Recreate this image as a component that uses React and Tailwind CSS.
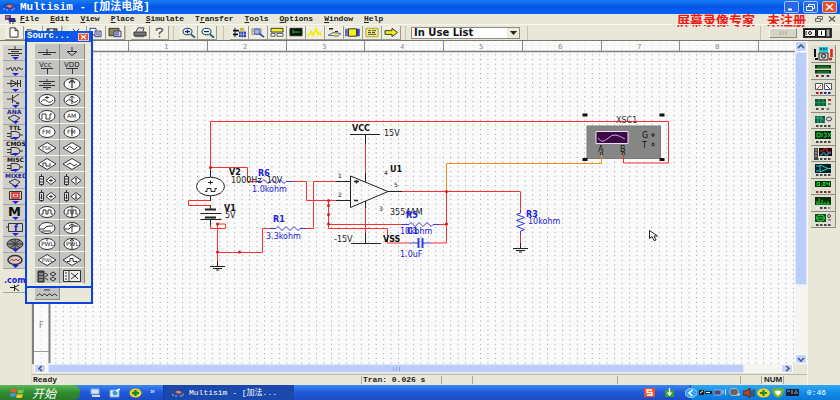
const menus = [
  ["", "F", "ile"],
  ["", "E", "dit"],
  ["", "V", "iew"],
  ["", "P", "lace"],
  ["", "S", "imulate"],
  ["T", "r", "ansfer"],
  ["", "T", "ools"],
  ["", "O", "ptions"],
  ["", "W", "indow"],
  ["", "H", "elp"],
];

/* ---------- small chips used in the title bar, menu and taskbar ---------- */
function AppIcon() {
  return (
    <svg width="13" height="10" viewBox="0 0 13 10">
      <path d="M0 4l5-3 8 3-5 4z" fill="#3a3f8c" />
      <path d="M3 4l3-1.5L10 4 7 6z" fill="#c98a7a" />
      <path d="M1 6v2M4 7v2M9 7v2M11 5.500v2" stroke="#b9bdd8" />
    </svg>
  );
}

function DocIcon() {
  return (
    <svg width="13" height="10" viewBox="0 0 13 10">
      <path d="M1 1h6v5H1z" fill="#5a4aa8" />
      <path d="M2 2h3v2H2z" fill="#d66" />
      <path d="M4 4h7l1 4H5z" fill="#2e2a80" />
      <path d="M6 8v2M9 8v2" stroke="#333" />
    </svg>
  );
}

/* ---------- title bar ---------- */
function TitleBar() {
  return (
    <header className="flex h-3.5 shrink-0 items-center gap-1 bg-linear-to-b from-[#1a7cf4] via-[#0557e6] to-[#0562f8] pr-[3px] pl-[3px]">
      <AppIcon />
      <h1 className="flex-1 font-['Liberation_Mono','Noto_Sans_CJK_SC',monospace] text-[11px] leading-none font-bold whitespace-pre text-white">
        Multisim - [加法电路]
      </h1>
      <div className="flex gap-1">
        <button aria-label="Minimize" className="flex h-3 w-[15px] items-center justify-center rounded-xs border border-[#a9c6fa] bg-[#2a66e8]">
          <svg width="9" height="8"><path d="M1 6.500h4" stroke="#fff" strokeWidth="2" /></svg>
        </button>
        <button aria-label="Restore" className="flex h-3 w-[15px] items-center justify-center rounded-xs border border-[#a9c6fa] bg-[#2a66e8]">
          <svg width="11" height="8" fill="none" stroke="#fff"><path d="M3.500 3V1.500h6v4H8M1.500 3.500h6v4h-6z" /></svg>
        </button>
        <button aria-label="Close" className="flex h-3 w-[15px] items-center justify-center rounded-xs border border-[#f0b8a8] bg-[#e2512c]">
          <svg width="9" height="8"><path d="M1 1l7 6M8 1L1 7" stroke="#fff" strokeWidth="1.600" /></svg>
        </button>
      </div>
    </header>
  );
}

function MenuBar() {
  return (
    <nav className="flex h-2.5 shrink-0 items-center pr-[3px] pl-1">
      <DocIcon />
      <ul className="ml-[3px] flex flex-1 gap-[11px] font-['Liberation_Mono',monospace] text-[8px] leading-none text-[#222]">
        {menus.map(([pre, key, rest]) => (
          <li key={pre + key + rest}>
            <button className="block font-bold">
              {pre}
              <span className="underline">{key}</span>
              {rest}
            </button>
          </li>
        ))}
      </ul>
      <p className="mr-0.5 flex gap-3 font-['Noto_Sans_CJK_SC',sans-serif] text-[13px] leading-none font-bold text-[#f01818]">
        <span>屏幕录像专家</span>
        <span>未注册</span>
      </p>
      <button aria-label="Restore document" className="flex w-5 justify-center">
        <svg width="9" height="8" fill="none" stroke="#666"><path d="M3.500 3V1.500h5v3H7M1.500 3.500h5v3h-5z" /></svg>
      </button>
      <button aria-label="Close document">
        <svg width="9" height="8"><path d="M1 1.500l6 5M7 1.500l-6 5" stroke="#555" strokeWidth="1.400" /></svg>
      </button>
    </nav>
  );
}

/* ---------- toolbar ---------- */
const toolIcons = {
  New: <path d="M5 2h5l3 3v7H5zM10 2v3h3" fill="#fff" stroke="#333" />,
  Open: <path d="M3 11V4h4l1 1h5v6z" fill="#e8d060" stroke="#555" />,
  Save: <path d="M4 3h10v8H4zM6 3v3h5V3" fill="#778" stroke="#333" />,
  Cut: <path d="M5 3l6 8M11 3L5 11" stroke="#335" />,
  Copy: (
    <g fill="#fff" stroke="#34347c">
      <path d="M3 2.500h6v7H3z" />
      <path d="M8 5.500h6v6H8zM9 7.500h4M9 9.500h4" />
    </g>
  ),
  Paste: (
    <g>
      <path d="M3 2.500h10v8H3z" fill="#8a8a48" stroke="#333" />
      <path d="M8 5.500h7v6H8z" fill="#dcdcf4" stroke="#34347c" />
      <path d="M9 7.500h4M9 9.500h4" stroke="#34347c" />
    </g>
  ),
  Print: (
    <g>
      <path d="M5 6l2-4h6l-1 4" fill="#ddd" stroke="#444" />
      <path d="M3 6.500h12v4H3z" fill="#777" stroke="#333" />
      <path d="M4 11.500h9" stroke="#555" />
    </g>
  ),
  Help: <path d="M6.500 5V3.500l2-1h2l2 1v1.500L9.500 7.500V9M9.500 10.500V12" stroke="#555" strokeWidth="1.400" fill="none" />,
  "Zoom in": (
    <g>
      <ellipse cx="8.500" cy="6" rx="4.500" ry="3.500" fill="#dfe" stroke="#223" />
      <path d="M6 6h5M8.500 4v4" stroke="#1818a0" strokeWidth="1.300" />
      <path d="M12 9l4 3.500" stroke="#1c5a78" strokeWidth="2" />
    </g>
  ),
  "Zoom out": (
    <g>
      <ellipse cx="8.500" cy="6" rx="4.500" ry="3.500" fill="#dfe" stroke="#223" />
      <path d="M6 6h5" stroke="#1818a0" strokeWidth="1.300" />
      <path d="M12 9l4 3.500" stroke="#1c5a78" strokeWidth="2" />
    </g>
  ),
  "Design bars": (
    <g>
      <path d="M3 4h6v2H3zM3 8h5v2H3z" fill="#111" />
      <path d="M5 2v10" stroke="#111" />
      <path d="M10 2h4v3h-4z" fill="#c8b820" />
      <path d="M9 6h7v6H9z" fill="#2838a8" />
      <path d="M11 6v6M13.500 6v6M9 9h7" stroke="#9aa4e0" />
    </g>
  ),
  "Component editor": (
    <g>
      <path d="M3 3h9v6H3z" fill="#e8e0a0" stroke="#889" />
      <circle cx="8" cy="6" r="3" fill="#9cb4f0" stroke="#4858a8" />
      <path d="M10 8l5 4" stroke="#3848b0" strokeWidth="1.800" />
    </g>
  ),
  Instruments: (
    <g>
      <path d="M3 2.500h12v4H3z" fill="#f8f020" stroke="#333" />
      <path d="M3 8h4v3H3zM9 8h6v3H9z" fill="#fff" stroke="#555" />
    </g>
  ),
  Simulate: (
    <g>
      <path d="M3 2.500h12v8H3z" fill="#041404" stroke="#222" />
      <path d="M6 4v4M6 6.500h7" stroke="#18d030" />
    </g>
  ),
  Analyses: <path d="M2 11l3-5 2 4 3-7 2 6 2-2 1 3" fill="none" stroke="#f4ec10" strokeWidth="1.800" />,
  Postprocessor: (
    <g>
      <path d="M4 3h4M10 6h3" stroke="#222" strokeWidth="1.500" />
      <path d="M3 10l5-3 8 1-3 3z" fill="#f0e860" stroke="#5868b8" />
    </g>
  ),
  VHDL: (
    <g>
      <path d="M4.500 3h8v8h-8z" fill="#f8f010" stroke="#333" />
      <path d="M2 3v8M4 3v8M15 3v8M13.500 3v8" stroke="#2c3cae" strokeWidth="1.400" />
    </g>
  ),
  Reports: (
    <g>
      <path d="M3 2.500h12v9H3z" fill="#f6f080" stroke="#aa9c30" />
      <path d="M5 5h3M9 5h4M5 7h3M9 7h3M5 9h8" stroke="#444" />
    </g>
  ),
  Transfer: <path d="M3 5h7V2.500l5.500 4.500-5.500 4.500V9H3z" fill="#f8ee10" stroke="#333" />,
};

const toolGroups = [
  ["New", "Open", "Save"],
  ["Cut", "Copy", "Paste"],
  ["Print", "Help"],
  ["Zoom in", "Zoom out"],
  ["Design bars", "Component editor", "Instruments", "Simulate", "Analyses", "Postprocessor", "VHDL", "Reports", "Transfer"],
];

function Toolbar() {
  return (
    <div className="flex h-[17px] shrink-0 items-center border-t border-b border-t-[#f8f8f0] border-b-[#77776c] pr-2 pl-[5px]">
      {toolGroups.map((group) => (
        <div key={group[0]} className="mr-[5px] flex border-r border-[#c4c2b0] nth-3:pr-1 nth-4:mr-1.5 nth-4:pr-1.5 nth-5:pr-1">
          {group.map((name) => (
            <button key={name} aria-label={name} className="h-3.5 w-[19px] border-r border-b border-[#9c9b8c] bg-[#efeee2]">
              <svg width="18" height="13" viewBox="0 0 18 14" preserveAspectRatio="none" fill="none">
                {toolIcons[name]}
              </svg>
            </button>
          ))}
        </div>
      ))}
      <label className="relative block">
        <select
          aria-label="Component list"
          className="block h-3 w-[109px] appearance-none border border-[#8c8c80] bg-white pl-[2px] font-['DejaVu_Sans',sans-serif] text-[10px] leading-none font-bold text-[#111]"
        >
          <option>In Use List</option>
        </select>
        <span className="pointer-events-none absolute top-px right-px flex h-2.5 w-3 items-center justify-center bg-[#ecebdc]">
          <svg width="7" height="4"><path d="M0 0h7L3.500 4z" fill="#222" /></svg>
        </span>
      </label>
      <span className="ml-[7px] h-3.5 flex-1 border-x border-[#c4c2b0]" />
      <div className="ml-2 flex gap-1.5">
        <button aria-label="Pause" className="flex h-2.5 w-7 items-center justify-center border border-[#f8f8f0] border-r-[#8e8d80] border-b-[#8e8d80] bg-[#d6d4c6]">
          <svg width="10" height="6"><path d="M2 1v4M5 1v4M8 1v4" stroke="#aaa899" /></svg>
        </button>
        <button aria-label="Run switch" className="h-2.5 w-[29px] bg-[#333]">
          <svg width="29" height="10" viewBox="0 0 29 10" className="block">
            <path d="M1.500 1.500h11v7h-11z" fill="#f4f4ec" stroke="#111" />
            <path d="M14.500 1.500h8v7h-8z" fill="#fff" stroke="#111" />
            <path d="M23 1h4v8h-4z" fill="#aaa" stroke="#111" />
            <circle cx="7" cy="5" r="1.500" fill="none" stroke="#111" />
            <path d="M18.500 3v4M3 3v4" stroke="#111" />
          </svg>
        </button>
      </div>
    </div>
  );
}

/* ---------- component rail on the left ---------- */
const railLabel = "font-['DejaVu_Sans',sans-serif] text-[6px] font-bold";
const gate = <path d="M8 6.500h5q4 .500 4 3.500t-4 3.500H8zM4 8.500h4M4 11.500h4M17 10h3" />;

const railItems = [
  ["Sources", <path key="i" d="M12 1v3M5 4.500h14M8 6.500h8M5 8.500h14M8 10.500h8" />],
  ["Basic", <path key="i" d="M3 8h3l1.500-2 2 4 2-4 2 4 2-4 1.500 2h3" />],
  ["Diodes", <path key="i" d="M4 6.500h14M8 3v7l6-3.500zM14.500 3v7M17.500 3v7" />],
  ["Transistors", <path key="i" d="M4 6h5M9.500 2v8M10 5l6-4M10 7l6 4M13 10.500l3 .500-1-2" />],
  ["Analog", <g key="i"><text x="4" y="5" className={railLabel} fill="#22229c" stroke="none">ANA</text><path d="M5 9l6-3 6 3-6 4z" /></g>],
  ["TTL", <g key="i"><text x="6" y="5" className={railLabel} fill="#111" stroke="none">TTL</text>{gate}</g>],
  ["CMOS", <g key="i"><text x="3" y="5" className={railLabel} fill="#111" stroke="none">CMOS</text>{gate}</g>],
  ["Misc Digital", <g key="i"><text x="4" y="5" className={railLabel} fill="#111" stroke="none">MISC</text>{gate}</g>],
  ["Mixed", <g key="i"><text x="2" y="5" className={railLabel} fill="#22229c" stroke="none">MIXED</text><path d="M6 9l6-3 5 3-5 4z" /></g>],
  ["Indicators", <g key="i"><path d="M6.500 2.500h12v8h-12z" /><path d="M9 4h7v5H9zM11 6.500h3" stroke="#e02020" strokeWidth="1.400" /></g>],
  ["Miscellaneous", <text key="i" x="5" y="11" className="font-['DejaVu_Sans',sans-serif] text-[13px] font-bold" fill="#111" stroke="none">M</text>],
  ["Controls", <g key="i"><path d="M5.500 2.500h14v8h-14zM3 6h3" /><text x="11" y="10" className="font-['DejaVu_Sans',sans-serif] text-[9px] font-bold" fill="#2020d0" stroke="none">f</text></g>],
  ["RF", <g key="i"><ellipse cx="12" cy="7" rx="8" ry="5" fill="#888" /><path d="M4 7h16M12 2v10M7 3l10 8M17 3L7 11" /></g>],
  ["Electromechanical", <g key="i"><ellipse cx="12" cy="7" rx="7" ry="4.500" strokeWidth="1.500" /><path d="M7 8l2-2 2 2 2-2 2 2 2-2" stroke="#e02020" /></g>],
];

function Rail() {
  return (
    <aside className="w-8 shrink-0 border-r border-[#dddccb] pt-1 pl-[3px]">
      {railItems.map(([name, art]) => (
        <button key={name} aria-label={name} className="block h-4 w-6 border-r border-b border-[#a5a496] bg-[#d0cfc8]">
          <svg width="24" height="15" viewBox="0 0 24 15" fill="none" stroke="#333">
            {art}
            <path d="M9 12h7l-3.500 3z" fill="#1c1cff" stroke="none" />
          </svg>
        </button>
      ))}
      <button aria-label="EDAparts.com" className="mt-1 block h-5 w-6 border-b border-[#a5a496]">
        <svg width="24" height="19" viewBox="0 0 24 19" fill="none" stroke="#222" className="block">
          <text x="1" y="10" className="font-['DejaVu_Sans',sans-serif] text-[8px] font-bold" fill="#2020d8" stroke="none">.com</text>
          <path d="M7 14.500h4M11.500 12v6M12 14l4-2M12 15l4 3" />
        </svg>
      </button>
    </aside>
  );
}

/* ---------- floating palette with the sources ---------- */
const round = <ellipse cx="11" cy="7" rx="8" ry="5.500" fill="#fff" />;
const diamond = <path d="M2 7l9-5.500L20 7l-9 5.500z" fill="#fff" />;
const pal = "font-['DejaVu_Sans',sans-serif] text-[6px]";

const label = (value, x = 6) => (
  <text x={x} y="9" className={pal} fill="#222" stroke="none">{value}</text>
);
const controlled = (arrow, mark) => (
  <g>
    <path d="M3.500 3.500h4v8h-4zM5.500 1v2M5.500 12v1" fill="#ddd" />
    <path d={arrow} />
    <path d="M10 7.500l5-4 5 4-5 4z" fill="#fff" />
    <path d={mark} />
  </g>
);

const sources = [
  ["Ground", <path key="s" d="M2 7.500h18M7 9.500h8M11 4v5" />],
  ["Digital ground", <path key="s" d="M11 2v4M6 6.500h10l-5 4z" />],
  ["VCC", <g key="s"><text x="3" y="6" className="font-['DejaVu_Sans',sans-serif] text-[7px]" fill="#222" stroke="none">Vcc</text><path d="M5 7.500h12M11.500 8v5" /></g>],
  ["VDD", <g key="s"><text x="3" y="6" className="font-['DejaVu_Sans',sans-serif] text-[7px]" fill="#222" stroke="none">VDD</text><path d="M5 7.500h12M11.500 8v5" /></g>],
  ["DC voltage", <path key="s" d="M3 4.500h16M7 6.500h8M3 8.500h16M7 10.500h8M11 2v2M11 11v2" />],
  ["DC current", <g key="s">{round}<path d="M11 11V4M8 6l3-3 3 3" strokeWidth="1.300" /></g>],
  ["AC voltage", <g key="s">{round}<path d="M5 9q3-4 6-1t6-1M11 3v3M9 4.500h4" /></g>],
  ["AC current", <g key="s">{round}<path d="M5 9q3-4 6-1t6-1M11 11V3M8.500 5L11 3l2.500 2" /></g>],
  ["Clock", <g key="s">{round}<path d="M6 10V5h4v5h4V5h2" /></g>],
  ["AM", <g key="s">{round}{label("AM")}</g>],
  ["FM voltage", <g key="s">{round}{label("FM")}</g>],
  ["FM current", <g key="s">{round}{label("FM")}<path d="M11 11V3" /></g>],
  ["FSK", <g key="s">{diamond}<text x="6" y="9" className="font-['DejaVu_Sans',sans-serif] text-[5px]" fill="#222" stroke="none">FSK</text></g>],
  ["Controlled sine", <g key="s">{diamond}<path d="M6 8q2.500-4 5-1t5-1" /></g>],
  ["Controlled square", <g key="s">{diamond}<path d="M7 9V6h3v3h4V6" /></g>],
  ["Controlled triangle", <g key="s">{diamond}<path d="M6 8l3-2 4 3 3-2" /></g>],
  ["VCVS", controlled("M4 6h3M4 9h3", "M13 7.500h4M15 6v3")],
  ["VCCS", controlled("M4 6h3M4 9h3", "M15 10V5M14 6h2")],
  ["CCVS", controlled("M5.500 5v5M4.500 9h2", "M13 7.500h4M15 6v3")],
  ["CCCS", controlled("M5.500 5v5M4.500 9h2", "M15 10V5M14 9h2")],
  ["Pulse voltage", <g key="s">{round}<path d="M5 9h2V5h3v4h2V5h3v4h2" /></g>],
  ["Pulse current", <g key="s">{round}<path d="M5 9h2V5h3v4h2V5h3v4h2M11 12V2" /></g>],
  ["Exponential voltage", <g key="s">{round}<path d="M4 8h4q2-3 5-3h4M6 10h9" /></g>],
  ["Exponential current", <g key="s">{round}<path d="M4 8h4q2-3 5-3h4M11 11V3M8 5l3-2 3 2" /></g>],
  ["PWL voltage", <g key="s">{round}{label("PWL", 5)}<path d="M11 2v2" /></g>],
  ["PWL current", <g key="s">{round}{label("PWL", 5)}<path d="M11 12V2M9 4l2-2 2 2" /></g>],
  ["Controlled PWL", <g key="s">{diamond}<text x="6" y="9" className="font-['DejaVu_Sans',sans-serif] text-[5px]" fill="#222" stroke="none">PWL</text></g>],
  ["Controlled one-shot", <g key="s">{diamond}<path d="M6 8.500h3V5.500h3v3h4" /></g>],
  ["Polynomial", <g key="s"><path d="M2 2h6v11H2z" fill="#444" /><path d="M3 5h4M3 8h4M3 11h4" stroke="#ccc" /><path d="M9 4l3 2-3 2M9 9l3 2M14 5l3-2 3 2-3 2zM14 10l3-2 3 2-3 2z" /></g>],
  ["Nonlinear dependent", <g key="s"><path d="M2.500 1.500h17v11h-17zM8 2v10" fill="#eee" /><path d="M4 4h2M4 7h2M4 10h2M10 4l4 3-4 3M14 7l3-3M14 7l3 3" /></g>],
];

function SourcesPalette() {
  return (
    <section className="absolute top-[31px] left-[25px] z-10 w-[68px] border-2 border-t-0 border-[#0b43d8] bg-[#e9e8d8]">
      <div className="flex h-[11px] items-center justify-between bg-[#0b58ea] pr-0.5">
        <h2 className="font-['Liberation_Mono',monospace] text-[9px] leading-none font-bold text-white">Sourc...</h2>
        <button aria-label="Close palette" className="flex h-2 w-[11px] items-center justify-center border border-[#f4c4b4] bg-[#e2512c]">
          <svg width="7" height="6"><path d="M1 1l5 4M6 1L1 5" stroke="#fff" strokeWidth="1.300" /></svg>
        </button>
      </div>
      <div className="grid w-[58px] grid-cols-2 pt-0.5 pl-2">
        {sources.map(([name, art]) => (
          <button key={name} aria-label={name} className="h-4 border-r border-b border-[#8c8b80] border-b-[#f4f3e8] bg-[#c3c3c1]">
            <svg width="22" height="14" viewBox="0 0 22 14" fill="none" stroke="#333" className="mx-auto block">
              {art}
            </svg>
          </button>
        ))}
      </div>
      <div className="mt-0.5 h-4 border-t-2 border-[#0b43d8] pl-2">
        <button aria-label="Inductor" className="block h-3 w-[25px] border-r border-b border-[#8c8b80] bg-[#c3c3c1]">
          <svg width="24" height="10" fill="none" stroke="#333" className="block">
            <path d="M2 7q2.500-4 5 0 2.500-4 5 0 2.500-4 5 0 2.500-4 5 0M9 1h6" />
          </svg>
        </button>
      </div>
    </section>
  );
}

/* ---------- schematic ---------- */
const plain = "font-['DejaVu_Sans',sans-serif] text-[8px]";
const heavy = "font-['DejaVu_Sans',sans-serif] text-[8px] font-bold";
const tiny = "font-['DejaVu_Sans',sans-serif] text-[6px]";

const notes = [
  [352, 131, "VCC", heavy, "#111"],
  [384, 136, "15V", plain, "#222"],
  [390, 172, "U1", heavy, "#111"],
  [384, 175, "4", tiny, "#111"],
  [394, 187, "5", tiny, "#222"],
  [338, 178, "1", tiny, "#222"],
  [338, 197, "2", tiny, "#222"],
  [379, 211, "3", tiny, "#222"],
  [390, 215, "3554AM", plain, "#222"],
  [334, 242, "-15V", plain, "#222"],
  [383, 242, "VSS", heavy, "#111"],
  [229, 175, "V2", heavy, "#111"],
  [231, 183, "1000Hz  10V", plain, "#222"],
  [224, 211, "V1", heavy, "#111"],
  [225, 218, "5V", plain, "#222"],
  [258, 176, "R6", heavy, "#2222d8"],
  [252, 192, "1.0kohm", plain, "#2222d8"],
  [273, 222, "R1", heavy, "#2222d8"],
  [266, 239, "3.3kohm", plain, "#2222d8"],
  [406, 218, "R5", heavy, "#2222d8"],
  [400, 234, "10kohm", plain, "#2222d8"],
  [407, 234, "C1", heavy, "#2222d8"],
  [400, 257, "1.0uF", plain, "#2222d8"],
  [526, 217, "R3", heavy, "#2222d8"],
  [528, 224, "10kohm", plain, "#2222d8"],
  [616, 123, "XSC1", plain, "#333"],
];

const joints = [
  [210.5, 167.5], [217.5, 224], [217.5, 252], [239.5, 252], [328.5, 200.5],
  [328.5, 205.5], [328.5, 214.5], [328.5, 224], [446.5, 191.5], [446.5, 224],
];

const rulerTicks = [128, 207, 286, 364, 443, 522, 601, 679, 758];

function Schematic() {
  return (
    <svg className="h-full w-full bg-[#fafafa]" role="img" aria-label="Adder circuit">
      <defs>
        <pattern id="grid" x="1" y="4" width="7.450" height="4.670" patternUnits="userSpaceOnUse">
          <rect width="1" height="1" fill="#9a9a9a" />
        </pattern>
      </defs>
      <rect width="100%" height="100%" fill="url(#grid)" />
      {/* drawn in window coordinates */}
      <g transform="translate(-32 -41)" fill="none">
        {/* sheet rulers */}
        <path d="M50 41h745v10H50zM34 51h15v312H34z" fill="#fafafa" fillOpacity=".6" />
        <path d="M49 51.500h746" stroke="#808080" strokeWidth="1.500" />
        <path d="M33 41v324M49.500 51v312" stroke="#808080" strokeWidth="2" />
        <path d="M34 351.500h15" stroke="#999" />
        <text x="39" y="328" className={plain} fill="#888">F</text>
        {rulerTicks.map((x) => (
          <path key={x} d={`M${x}.500 41v10`} stroke="#888" />
        ))}
        {rulerTicks.slice(0, 8).map((x, i) => (
          <text key={x} x={x + 36} y="49" className="font-['DejaVu_Sans',sans-serif] text-[7px]" fill="#888">{i + 1}</text>
        ))}

        {/* oscilloscope */}
        <path d="M587 126h73.500v32.500H587z" fill="#868686" stroke="#7a7a7a" />
        <path d="M596 131.500h32v12h-32z" fill="#3c0848" stroke="#e8e0ec" />
        <path d="M598 138q4 6 9 1t9-4 9 4" stroke="#c8a8d0" />
        <g fill="#111" className={plain}>
          <text x="642" y="138">G</text>
          <text x="642" y="148">T</text>
          <text x="598" y="152">A</text>
          <text x="620" y="152">B</text>
        </g>
        <g stroke="#222">
          <circle cx="653" cy="135" r="1.300" />
          <circle cx="653" cy="144.500" r="1.300" />
          <circle cx="601.500" cy="153.500" r="1.300" />
          <circle cx="623.500" cy="153.500" r="1.300" />
        </g>
        <path d="M582.500 113.500h5v3h-5zM659.500 113.500h5v3h-5zM582.500 158h5v3h-5zM659.500 158h5v3h-5z" fill="#111" />

        {/* wires */}
        <g stroke="#f83030">
          <path d="M210.500 172v-50.500h458v41.500h-45v-9" />
          <path d="M210.500 167.500h37v14h13M288 181.500h18.500v19H336" />
          <path d="M210.500 200.500h-22v5h22v2" />
          <path d="M210.500 224v4.500h15v-4.500h-8V262M217.500 252.500h45v-24H275M301 228.500h12.500v-47H336" />
          <path d="M328.500 200.500v28h59v14.500H410M328.500 224.500H404M435 224.500h11.500M431 243h15.500v-51.500" />
          <path d="M402 191.500h118.500V210M520.500 234v10M365.500 144v29M365.500 208v25" />
        </g>
        <path d="M446.500 191v-27.500h155v-9" stroke="#f09020" />

        {/* black parts */}
        <g stroke="#222">
          <path d="M210.500 170v7M210.500 196v5M210.500 205v4M210.500 219v6" />
          <ellipse cx="210.500" cy="186.500" rx="14" ry="9.300" fill="#fff" />
          <path d="M205 191.500h2v-3h4v3h4v-3h2M210.500 180.500v4M208 182.500h5" />
          <path d="M205 209.500h11M205 217.500h11" strokeWidth="2" />
          <path d="M200.500 213.500h21M200.500 219.500h21" />
          <path d="M217.500 261v5M210 266.500h15M213 268.500h9M216 270h3" />
          <path d="M520.500 243v5M513 248.500h15M516 250.500h9M519 252h3" />
          <path d="M350.500 176v31.500l37.500-16zM336 181.500h14M336 200.500h14M388 191.500h14" />
          <path d="M354 181.500h5M356.500 180v3.500M354 200.500h4" strokeWidth="1.500" />
          <path d="M350 134.500h30M365.500 134v10M365.500 173v9M365.500 201v7M365.500 233v10.500M351 243.500h30" />
        </g>

        {/* resistors and capacitor */}
        <g stroke="#3838e0">
          <path d="M256 181.500h6l2-2 4 4 4-4 4 4 4-4 4 4 2-2h6" />
          <path d="M270 228.500h6l2-2 4 4 4-4 4 4 4-4 4 4 2-2h6" />
          <path d="M402 224.500h7l2-2 4 4 4-4 4 4 4-4 4 4 2-2h6" />
          <path d="M520.500 210v3l-4 1.500 8 3-8 3 8 3-8 3 8 3-4 1.500v4" />
          <path d="M410 243h8M423 243h8" />
          <path d="M418.500 238v10M422.500 238v10" strokeWidth="2" />
        </g>

        {joints.map(([x, y]) => (
          <circle key={`${x}-${y}`} cx={x} cy={y} r="1.500" fill="#d81818" />
        ))}
        {notes.map(([x, y, value, cls, fill]) => (
          <text key={`${x}-${y}`} x={x} y={y} className={`${cls} whitespace-pre`} fill={fill}>{value}</text>
        ))}

        {/* mouse pointer */}
        <path d="M649.500 230.500v8l2.500-2 2 4 2-.500-2-4h3.500z" fill="#fff" stroke="#222" />
      </g>
    </svg>
  );
}

/* ---------- scroll bars ---------- */
const scrollBtn = "flex shrink-0 items-center justify-center rounded-xs border border-white bg-[#c3d3fb]";

function Workspace() {
  return (
    <main className="flex min-w-0 flex-1 flex-col">
      <div className="flex min-h-0 flex-1">
        <div className="min-w-0 flex-1"><Schematic /></div>
        <div className="flex w-3 shrink-0 flex-col bg-[#f4f4f0]">
          <button aria-label="Scroll up" className={`${scrollBtn} h-[11px]`}>
            <svg width="8" height="5" fill="none" stroke="#45587c" strokeWidth="1.600"><path d="M1 4l3-3 3 3" /></svg>
          </button>
          <div className="flex-1">
            <div className="h-[77%] rounded-xs border border-[#dfe7fd] bg-[#bccdf9]" />
          </div>
          <button aria-label="Scroll down" className={`${scrollBtn} h-2.5`}>
            <svg width="8" height="5" fill="none" stroke="#45587c" strokeWidth="1.600"><path d="M1 1l3 3 3-3" /></svg>
          </button>
        </div>
      </div>
      <div className="mr-[14px] ml-0.5 flex h-[9px] shrink-0 bg-[#f4f4f0]">
        <button aria-label="Scroll left" className={`${scrollBtn} w-3`}>
          <svg width="5" height="7" fill="none" stroke="#45587c" strokeWidth="1.600"><path d="M4 1L1 3.500 4 6" /></svg>
        </button>
        <div className="flex-1 pl-0.5">
          <div className="flex h-full w-[95%] items-center justify-center rounded-xs border border-[#dfe7fd] bg-[#bccdf9]">
            <svg width="7" height="4"><path d="M.500 0v4M3.500 0v4M6.500 0v4" stroke="#8aa6e8" /></svg>
          </div>
        </div>
        <button aria-label="Scroll right" className={`${scrollBtn} w-3`}>
          <svg width="5" height="7" fill="none" stroke="#45587c" strokeWidth="1.600"><path d="M1 1l3 2.500L1 6" /></svg>
        </button>
      </div>
      <footer className="mt-px flex h-[11px] shrink-0 items-center border-t border-[#b8b7a8] font-['Liberation_Mono',monospace] text-[8px] leading-none font-bold text-[#222]">
        <span className="flex-1 pl-px">Ready</span>
        <span className="w-20 border-l border-[#a8a798] pl-px">Tran: 0.026 s</span>
        <span className="h-2 w-8 border-x border-[#a8a798]" />
        <span className="h-2 w-36" />
        <span className="h-2 w-[124px] border-x border-[#a8a798]" />
        <span className="h-2 w-5" />
        <span className="w-[23px] border-x border-[#a8a798] pl-0.5 font-['Liberation_Sans',sans-serif]">NUM</span>
        <span className="w-[23px]" />
      </footer>
    </main>
  );
}

/* ---------- instruments on the right ---------- */
const leds = (colors) =>
  colors.map((c, i) => <rect key={i} x={3 + i * (16 / colors.length)} y="11" width="2.500" height="2" fill={c} />);

const instruments = [
  ["Multimeter", <g key="m"><path d="M6 0h9v5H6z" fill="#18c8d8" /><path d="M6 6h9v7H6z" fill="#ccc" stroke="#222" /><circle cx="10.500" cy="9" r="2" stroke="#111" /><path d="M7 2h2M10 2h2M13 2h1" stroke="#111" /><path d="M2 2v8M2 12h3" stroke="#111" strokeWidth="2" /><path d="M18.500 2v8M16 12h3" stroke="#e02020" strokeWidth="2.500" /></g>],
  ["Function generator", <g key="m"><path d="M2 1h16v3.500H2zM2 6h16v3.500H2z" fill="#063c10" /><path d="M4 3h12M4 8h12" stroke="#2c9c3c" />{leds(["#822", "#333", "#228"])}</g>],
  ["Wattmeter", <g key="m"><path d="M2.500 2.500h7v6h-7zM11.500 2.500h7v6h-7z" fill="#fff" stroke="#555" /><path d="M4 8l4-4" stroke="#d33" /><path d="M13 4l4 4" stroke="#33d" />{leds(["#c11", "#811", "#22c", "#228"])}</g>],
  ["Oscilloscope", <g key="m"><path d="M2 2h11v7H2z" fill="#0c5c3c" /><path d="M2 5.500h11M6 2v7M10 2v7" stroke="#1c9c5c" /><path d="M15 3h3" stroke="#c22" strokeWidth="2" /><path d="M15 7h3" stroke="#333" />{leds(["#444", "#444", "#777"])}</g>],
  ["Bode plotter", <g key="m"><path d="M2 2h10v7H2z" fill="#0c5c3c" /><path d="M2 4h7l3 4M5 2v7M8 2v7" stroke="#28b898" /><ellipse cx="16" cy="5" rx="2.500" ry="2" fill="#ddd" stroke="#444" />{leds(["#444", "#444", "#444", "#444"])}</g>],
  ["Word generator", <g key="m"><path d="M2 1h16v8H2z" fill="#063008" /><path d="M4 3h3v4H4zM9 3v4M11 3h2v4h-2M15 3l3 4M18 3l-3 4" stroke="#24d838" />{leds(["#444", "#444", "#444", "#444"])}</g>],
  ["Logic analyzer", <g key="m"><path d="M1 1h4v12H1z" fill="#444" /><path d="M2 3h2M2 6h2M2 9h2" stroke="#ccc" /><path d="M6 1h13v8H6z" fill="#1c0808" /><path d="M7 4h3l1-2h3v3h4" stroke="#e02828" /><path d="M7 8h2V6h3v2h3V6h3" stroke="#20a8d8" />{leds(["#444", "#444", "#444", "#444"])}</g>],
  ["Logic converter", <g key="m"><path d="M2 1h16v9H2z" fill="#042020" /><path d="M3 3h4M3 8h4M7 2l8 3.500L7 9zM15 5.500h3" stroke="#28d0d8" />{leds(["#444", "#444", "#444", "#444"])}</g>],
  ["Distortion analyzer", <g key="m"><path d="M2 1h16v6H2z" fill="#063008" /><path d="M4 2.500h2.500v3H4zM8 6h1M10 2.500h2v3h-2zM14 2v2h3M16.500 2v4" stroke="#24d838" />{leds(["#c22", "#444", "#444", "#a22"])}</g>],
  ["Spectrum analyzer", <g key="m"><path d="M2 1h16v8H2z" fill="#063008" /><path d="M4 8V5M6 8V2M9 8V4M12 8V6M15 8V5M3 8h14" stroke="#24c838" />{leds(["#eee", "#444", "#444", "#999"])}</g>],
  ["Network analyzer", <g key="m"><path d="M2 1h11v8H2z" fill="#0c4c1c" /><ellipse cx="7.500" cy="5" rx="4" ry="3" stroke="#30d850" /><path d="M4 5h7" stroke="#30d850" /><circle cx="16" cy="3" r="1.500" stroke="#444" /><path d="M15 7h3" stroke="#444" />{leds(["#444", "#444", "#444", "#444"])}</g>],
];

function InstrumentBar() {
  return (
    <aside className="w-[33px] shrink-0 border-l border-[#f8f8f0] pt-1 pl-[3px]">
      {instruments.map(([name, art]) => (
        <button
          key={name}
          aria-label={name}
          className="flex h-4 w-[25px] items-center justify-center border-r border-b border-[#8f8e80] bg-[#e0dfd2] first:h-[18px] even:h-[17px]"
        >
          <svg width="20" height="14" viewBox="0 0 20 14" fill="none">{art}</svg>
        </button>
      ))}
    </aside>
  );
}

/* ---------- task bar ---------- */
function Taskbar() {
  return (
    <footer className="flex h-[15px] shrink-0 items-center bg-linear-to-b from-[#3c88f0] via-[#2158d8] to-[#1c4cc4] font-['Liberation_Mono','Noto_Sans_CJK_SC',monospace] text-[8px] leading-none text-white">
      <button className="flex h-full w-20 items-center gap-2 rounded-r-md bg-linear-to-b from-[#5cb85a] via-[#2f8c30] to-[#2a7a2a] pl-2.5">
        <svg width="14" height="10" viewBox="0 0 14 10">
          <path d="M1 1q3-1 6 0L6 4.500q-3-1-5.500 0z" fill="#e8582c" />
          <path d="M8 1.500q3 1 6 0L13 5q-3 1-5.500 0z" fill="#7cc83c" />
          <path d="M.500 5.500q3-1 5.500 0L5 9Q3 8 0 9z" fill="#5090f0" />
          <path d="M7 6q3 1 6 0l-1 3.500q-3 1-6 0z" fill="#f4cc30" />
        </svg>
        <span className="font-['Noto_Sans_CJK_SC',sans-serif] text-[12px] leading-none italic">开始</span>
      </button>
      <div className="flex w-[83px] items-center gap-2 pl-2.5">
        <button aria-label="Show desktop">
          <svg width="11" height="10"><path d="M1 1h8v5H1z" fill="#cfe4fc" stroke="#88b0e8" /><path d="M2 8h8" stroke="#d8d8e8" strokeWidth="2" /></svg>
        </button>
        <button aria-label="Media">
          <svg width="12" height="10"><path d="M1 2h9v7H1z" fill="#e0ecf8" stroke="#70a8e0" /><circle cx="6" cy="5" r="2.500" fill="#3c9cd8" /><path d="M7 3l4-2" stroke="#fff" strokeWidth="1.500" /></svg>
        </button>
        <button aria-label="Security">
          <svg width="13" height="10"><ellipse cx="6.500" cy="5" rx="6" ry="4.500" fill="#f0d820" /><path d="M6.500 2v6M3 5h7" stroke="#188838" strokeWidth="2.400" /></svg>
        </button>
        <span className="self-start">»</span>
      </div>
      <button className="flex h-full w-[131px] items-center gap-1 border-l border-[#1638a0] bg-[#1a48ac] pl-2">
        <AppIcon />
        <span className="whitespace-pre">Multisim - [加法...</span>
      </button>
      <span className="flex-1" />
      <div className="flex items-center gap-2.5 pr-4">
        <svg width="11" height="9"><rect width="11" height="9" rx="1" fill="#f05028" /><path d="M8 2H3v2.500h5V7H3" stroke="#fff" strokeWidth="1.400" fill="none" /></svg>
        <svg width="9" height="10"><path d="M0 2h9v7H0z" fill="#38a038" /><path d="M4.500 0v5M2.500 4.500L4.500 7l2-2.500" stroke="#fff" strokeWidth="1.300" fill="none" /></svg>
      </div>
      <div className="flex h-full items-center gap-0.5 border-l border-[#0c50b0] bg-linear-to-b from-[#30a8f8] via-[#128ce8] to-[#0e78d8] pr-3.5">
        <button aria-label="Hide tray icons" className="-ml-1.5">
          <svg width="12" height="10"><ellipse cx="6" cy="5" rx="6" ry="4.500" fill="#3aa0f4" stroke="#8cd0fc" /><path d="M7.500 2L4 5l3.500 3" stroke="#fff" strokeWidth="1.500" fill="none" /></svg>
        </button>
        <svg width="13" height="9"><path d="M0 2h5v5H0zM6 3h7v3H6z" fill="#222" /><path d="M1 5l3-2M7 4.500h4" stroke="#eee" /></svg>
        <svg width="13" height="9"><path d="M0 2h7v5H0z" fill="#484878" stroke="#aac" /><path d="M9 2v4M11.500 1v6" stroke="#bde" /></svg>
        <svg width="12" height="9"><ellipse cx="5" cy="4" rx="4.500" ry="3.500" fill="#666" stroke="#bbb" /><path d="M8 7l3-1" stroke="#ccc" strokeWidth="2" /></svg>
        <svg width="12" height="10"><path d="M0 3h3l4-3v10L3 7H0z" fill="#b04828" stroke="#5c2410" /><path d="M9 2v6M11 1v8" stroke="#482828" /></svg>
        <svg width="13" height="10"><ellipse cx="6.500" cy="5" rx="6.500" ry="4.500" fill="#f0d820" /><path d="M6.500 2v6M3 5h7" stroke="#188838" strokeWidth="2.200" /></svg>
        <svg width="12" height="10"><path d="M0 1q6-2 12 0 0 7-6 9-6-2-6-9z" fill="#78b030" /><path d="M3 3q3-1 6 0 0 3-3 4.500Q3 6 3 3z" fill="#fff" /></svg>
        <svg width="13" height="9"><path d="M0 1h13v7H0z" fill="#182038" /><path d="M1 3h3M6 2v4M8 5h4M10 2v2" stroke="#9ac" /></svg>
        <time className="pl-1.5">0:46</time>
      </div>
    </footer>
  );
}

export default function App() {
  return (
    <div className="relative flex h-screen flex-col overflow-hidden bg-[#e9e8d8]">
      <TitleBar />
      <MenuBar />
      <Toolbar />
      <div className="flex min-h-0 flex-1">
        <Rail />
        <Workspace />
        <InstrumentBar />
      </div>
      <Taskbar />
      <SourcesPalette />
    </div>
  );
}
